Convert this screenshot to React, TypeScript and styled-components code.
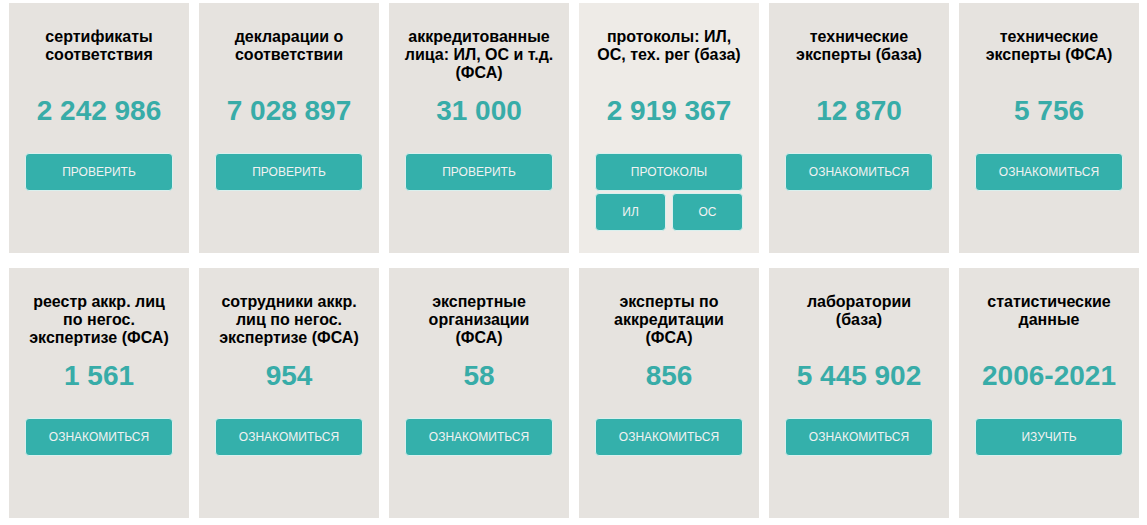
import React from 'react';
import styled, { createGlobalStyle } from 'styled-components';

interface StatType {
  title: string;
  value: string;
  button: string;
  extra?: string[];
  active?: boolean;
}

const STATS: StatType[] = [
  { title: 'сертификаты соответствия', value: '2 242 986', button: 'Проверить' },
  { title: 'декларации о соответствии', value: '7 028 897', button: 'Проверить' },
  { title: 'аккредитованные лица: ИЛ, ОС и т.д. (ФСА)', value: '31 000', button: 'Проверить' },
  {
    title: 'протоколы: ИЛ, ОС, тех. рег (база)',
    value: '2 919 367',
    button: 'Протоколы',
    extra: ['ИЛ', 'ОС'],
    active: true
  },
  { title: 'технические эксперты (база)', value: '12 870', button: 'Ознакомиться' },
  { title: 'технические эксперты (ФСА)', value: '5 756', button: 'Ознакомиться' },
  { title: 'реестр аккр. лиц по негос. экспертизе (ФСА)', value: '1 561', button: 'Ознакомиться' },
  { title: 'сотрудники аккр. лиц по негос. экспертизе (ФСА)', value: '954', button: 'Ознакомиться' },
  { title: 'экспертные организации (ФСА)', value: '58', button: 'Ознакомиться' },
  { title: 'эксперты по аккредитации (ФСА)', value: '856', button: 'Ознакомиться' },
  { title: 'лаборатории (база)', value: '5 445 902', button: 'Ознакомиться' },
  { title: 'статистические данные', value: '2006-2021', button: 'Изучить' }
];

const StatCard = ({ title, value, button, extra, active }: StatType) => (
  <Card $active={!!active}>
    <Title>{title}</Title>
    <Value>{value}</Value>
    <Actions>
      <ActionButton>{button}</ActionButton>
      {extra && (
        <SubRow>
          {extra.map(label => (
            <ActionButton key={label}>{label}</ActionButton>
          ))}
        </SubRow>
      )}
    </Actions>
  </Card>
);

const App = () => (
  <>
    <GlobalStyle />
    <Grid>
      {STATS.map(stat => (
        <StatCard key={stat.title} {...stat} />
      ))}
    </Grid>
  </>
);

export default App;

const GlobalStyle = createGlobalStyle`
  body {
    margin: 0;
    background: #ffffff;
    font-family: 'Liberation Sans', Arial, sans-serif;
  }
`;

const Grid = styled.div`
  display: grid;
  grid-template-columns: repeat(6, 180px);
  column-gap: 10px;
  row-gap: 15px;
  padding: 3px 9px;
`;

const Card = styled.div<{ $active: boolean }>`
  box-sizing: border-box;
  height: 250px;
  padding: 25px 14px 0;
  background: ${({ $active }) => ($active ? '#eeebe7' : '#e6e3df')};
  display: flex;
  flex-direction: column;
  align-items: center;
`;

const Title = styled.h3`
  margin: 0;
  height: 54px;
  width: 152px;
  font-size: 16px;
  line-height: 18px;
  font-weight: 700;
  color: #000;
  text-align: center;
`;

const Value = styled.div`
  margin-top: 13px;
  height: 32px;
  line-height: 32px;
  font-size: 28px;
  font-weight: 700;
  color: #38aca8;
  text-align: center;
`;

const Actions = styled.div`
  margin-top: 26px;
  width: 148px;
  display: flex;
  flex-direction: column;
  gap: 2px;
`;

const SubRow = styled.div`
  display: flex;
  justify-content: space-between;
  & > button {
    width: 71px;
  }
`;

const ActionButton = styled.button`
  box-sizing: border-box;
  height: 38px;
  width: 100%;
  padding: 0;
  border: 1px solid #d9f0ee;
  border-radius: 4px;
  background: #34b0ab;
  color: #f2f2f2;
  font-family: 'Liberation Sans', Arial, sans-serif;
  font-size: 12px;
  text-transform: uppercase;
  cursor: pointer;
`;
